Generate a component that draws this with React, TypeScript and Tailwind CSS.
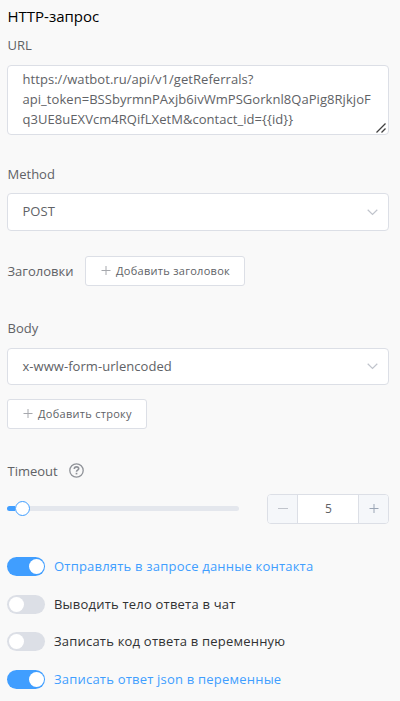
import React from "react";

function Plus({ className }: { className: string }) {
  return (
    <svg className={className} width="10" height="10" viewBox="0 0 10 10" fill="none" stroke="currentColor">
      <path d="M0.5 4.5H9.5M5 0V9" />
    </svg>
  );
}

function Label({ children, className = "" }: { children: React.ReactNode; className?: string }) {
  return <div className={`flex h-5 items-center text-[13px] leading-5 text-[#606266] ${className}`}>{children}</div>;
}

function Select({ value, className }: { value: string; className: string }) {
  return (
    <div className={`flex w-[382px] items-center justify-between rounded border border-[#dcdfe6] bg-white pl-[14.5px] pr-[10px] text-[13px] tracking-[0.05px] text-[#606266] ${className}`}>
      <span>{value}</span>
      <svg width="11" height="7" viewBox="0 0 11 7" fill="none" stroke="#c0c4cc" strokeWidth="1.2">
        <path d="M0.7 0.8L5.5 5.5L10.3 0.8" />
      </svg>
    </div>
  );
}

function AddButton({ text, className }: { text: string; className: string }) {
  return (
    <button className={`flex h-[30px] items-center rounded-[3px] border border-[#dcdfe6] bg-white pl-[15px] text-[11px] tracking-[0.28px] text-[#606266] ${className}`}>
      <Plus className="mr-[5px] text-[#a6a8ad]" />
      <span className="whitespace-nowrap">{text}</span>
    </button>
  );
}

function Toggle({ on, text }: { on: boolean; text: string }) {
  return (
    <div className="flex h-[37.6px] items-center">
      <span className={`flex h-[19px] w-[38px] items-center rounded-full px-[1.5px] ${on ? "justify-end bg-[#409eff]" : "justify-start bg-[#dcdfe6]"}`}>
        <span className="size-[15px] rounded-full bg-white" />
      </span>
      <span className={`ml-[9px] whitespace-nowrap text-[13px] tracking-[0.21px] ${on ? "text-[#409eff]" : "text-[#303133]"}`}>{text}</span>
    </div>
  );
}

export default function App() {
  return (
    <div className="h-[701px] w-[400px] overflow-hidden bg-[#f9f9f9] pl-[7px] pt-[6px] font-['Open_Sans','Noto_Sans',sans-serif]">
      <h1 className="h-5 pl-[0.5px] text-[15px] leading-5 text-black">HTTP-запрос</h1>
      <Label className="mt-[9px] pl-[0.5px]">URL</Label>
      <div className="relative mt-[10px] h-[70px] w-[382px] rounded border border-[#dcdfe6] bg-white pl-[14.5px] pt-[3px] text-[13px] leading-5 tracking-[0.05px] text-[#606266]">
        <div className="whitespace-nowrap">https://watbot.ru/api/v1/getReferrals?</div>
        <div className="whitespace-nowrap">api_token=BSSbyrmnPAxjb6ivWmPSGorknl8QaPig8RjkjoF</div>
        <div className="whitespace-nowrap">{"q3UE8uEXVcm4RQifLXetM&contact_id={{id}}"}</div>
        <svg className="absolute bottom-[1px] right-[2px]" width="10" height="10" viewBox="0 0 10 10" stroke="#404040" strokeWidth="1.3">
          <path d="M0.5 9.5L9.5 0.5M5.5 9.5L9.5 5.5" />
        </svg>
      </div>
      <Label className="mt-[29px] pl-[0.5px]">Method</Label>
      <Select value="POST" className="mt-[9px] h-[38px]" />
      <div className="mt-[25px] flex h-[30px] items-center">
        <Label className="w-[78px] pl-[0.5px]">Заголовки</Label>
        <AddButton text="Добавить заголовок" className="w-[160px]" />
      </div>
      <Label className="mt-[32px] pl-[0.5px]">Body</Label>
      <Select value="x-www-form-urlencoded" className="mt-[10px] h-[37px]" />
      <AddButton text="Добавить строку" className="mt-[14px] w-[140px]" />
      <div className="mt-[32px] flex h-5 items-center">
        <Label className="w-[62px] pl-[0.5px]">Timeout</Label>
        <svg className="mb-px" width="15" height="15" viewBox="0 0 15 15" fill="none" stroke="#909399" strokeWidth="1.3">
          <circle cx="7.5" cy="7.5" r="6.7" />
          <path d="M5.3 6C5.3 4.6 6.2 3.9 7.5 3.9S9.7 4.7 9.7 5.8C9.7 7.2 7.5 7.2 7.5 8.8" strokeWidth="1.6" />
          <path d="M7.5 9.8V11.4" strokeWidth="1.7" />
        </svg>
      </div>
      <div className="mt-[13px] flex h-[30px] items-center">
        <div className="mb-px flex h-[15px] w-[232px] items-center">
          <div className="h-[5px] w-2 rounded-l-full bg-[#409eff]" />
          <div className="size-[15px] rounded-full border border-[#409eff] bg-white" />
          <div className="h-[5px] flex-1 rounded-r-full bg-[#e4e7ed]" />
        </div>
        <div className="ml-7 flex h-[30px] w-[122px] overflow-hidden rounded border border-[#dcdfe6] bg-white text-[12px] text-[#606266]">
          <div className="flex w-[30px] items-center justify-center border-r border-[#dcdfe6] bg-[#f5f7fa]">
            <span className="mb-px h-px w-[10px] bg-[#c0c4cc]" />
          </div>
          <div className="flex flex-1 items-center justify-center pl-px">5</div>
          <div className="flex w-[30px] items-center justify-center border-l border-[#dcdfe6] bg-[#f5f7fa]">
            <Plus className="text-[#9aa5b5]" />
          </div>
        </div>
      </div>
      <div className="mt-[24px]">
        <Toggle on text="Отправлять в запросе данные контакта" />
        <Toggle on={false} text="Выводить тело ответа в чат" />
        <Toggle on={false} text="Записать код ответа в переменную" />
        <Toggle on text="Записать ответ json в переменные" />
      </div>
    </div>
  );
}
